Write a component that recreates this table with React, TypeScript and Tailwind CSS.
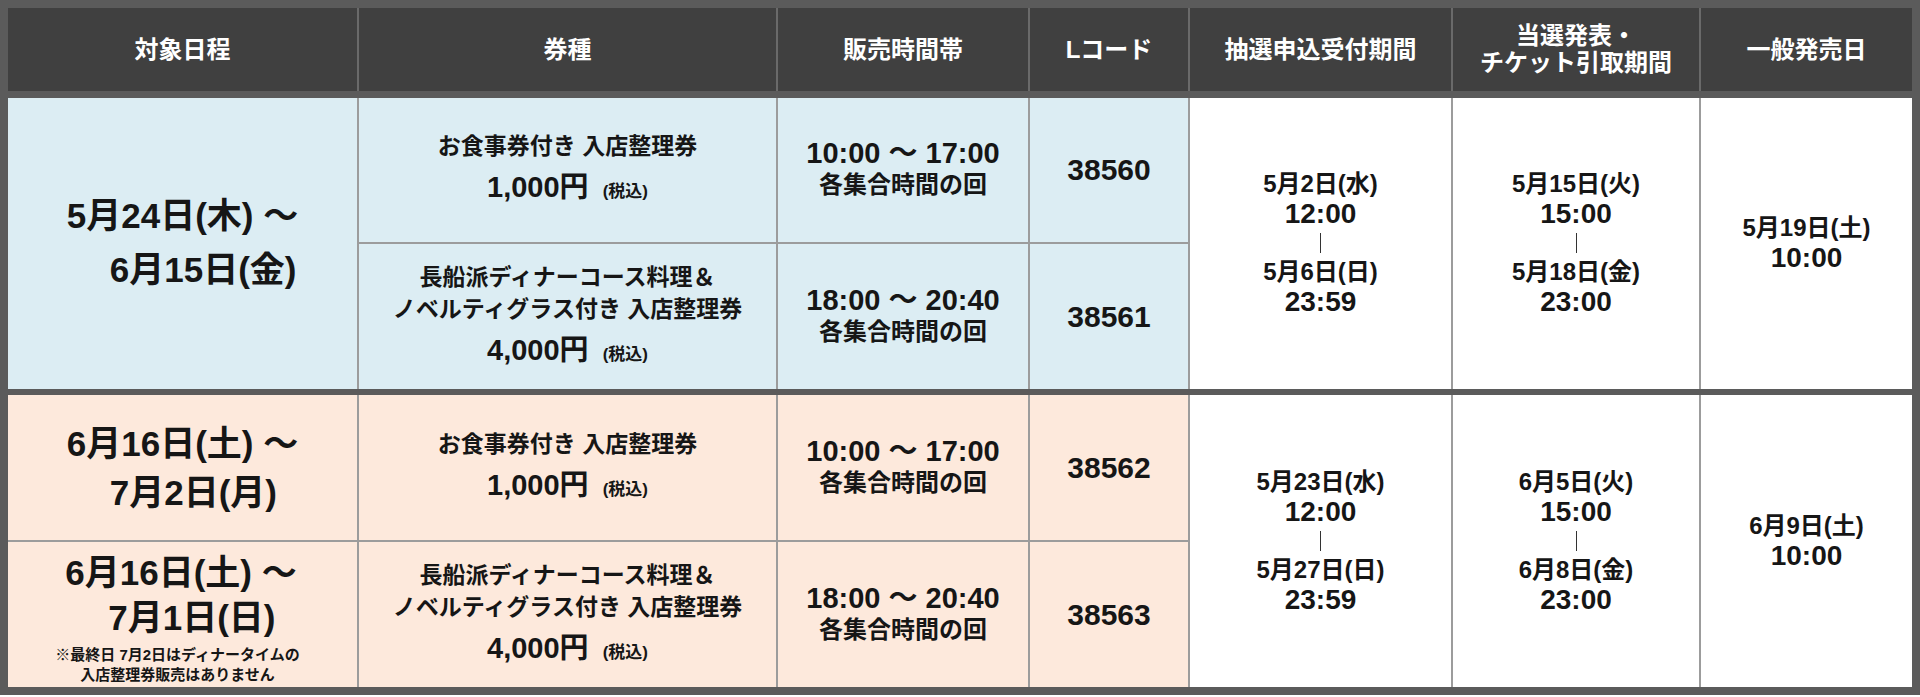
import React from 'react';

const FONT = "font-['Liberation_Sans','Noto_Sans_CJK_JP',sans-serif]";

interface TicketRow {
  name: string[];
  price: string;
  time: string;
  code: string;
}

interface Group {
  bg: string;
  dates: { from: string; to: string; note?: string[]; lh: string }[];
  rows: TicketRow[];
  lottery: [string, string, string, string];
  result: [string, string, string, string];
  general: [string, string];
}

const groups: Group[] = [
  {
    bg: 'bg-[#dcedf3]',
    dates: [{ from: '5月24日(木) 〜', to: '6月15日(金)', lh: 'leading-[54px]' }],
    rows: [
      { name: ['お食事券付き 入店整理券'], price: '1,000円', time: '10:00 〜 17:00', code: '38560' },
      {
        name: ['長船派ディナーコース料理＆', 'ノベルティグラス付き 入店整理券'],
        price: '4,000円',
        time: '18:00 〜 20:40',
        code: '38561',
      },
    ],
    lottery: ['5月2日(水)', '12:00', '5月6日(日)', '23:59'],
    result: ['5月15日(火)', '15:00', '5月18日(金)', '23:00'],
    general: ['5月19日(土)', '10:00'],
  },
  {
    bg: 'bg-[#fde9dc]',
    dates: [
      { from: '6月16日(土) 〜', to: '7月2日(月)', lh: 'leading-[49px]' },
      {
        from: '6月16日(土) 〜',
        to: '7月1日(日)',
        lh: 'leading-[45px]',
        note: ['※最終日 7月2日はディナータイムの', '入店整理券販売はありません'],
      },
    ],
    rows: [
      { name: ['お食事券付き 入店整理券'], price: '1,000円', time: '10:00 〜 17:00', code: '38562' },
      {
        name: ['長船派ディナーコース料理＆', 'ノベルティグラス付き 入店整理券'],
        price: '4,000円',
        time: '18:00 〜 20:40',
        code: '38563',
      },
    ],
    lottery: ['5月23日(水)', '12:00', '5月27日(日)', '23:59'],
    result: ['6月5日(火)', '15:00', '6月8日(金)', '23:00'],
    general: ['6月9日(土)', '10:00'],
  },
];

const headers = ['対象日程', '券種', '販売時間帯', 'Lコード', '抽選申込受付期間', '当選発表・\nチケット引取期間', '一般発売日'];

function DateCell({ d }: { d: Group['dates'][number] }) {
  return (
    <div className={`inline-block text-left font-bold ${d.note ? 'pt-[8px]' : ''}`}>
      <div className={`text-[35px] ${d.lh}`}>{d.from}</div>
      <div className={`pl-[43px] text-[35px] ${d.lh}`}>{d.to}</div>
      {d.note && (
        <div className="-ml-[10px] mt-[5px] text-center text-[15px] leading-[20px]">
          {d.note.map((n) => (
            <div key={n}>{n}</div>
          ))}
        </div>
      )}
    </div>
  );
}

function Period({ p }: { p: [string, string, string, string] }) {
  return (
    <div className="flex flex-col items-center font-semibold">
      <div className="text-[24px] leading-[30px]">{p[0]}</div>
      <div className="text-[28px] leading-[30px]">{p[1]}</div>
      <div className="my-[4px] h-[20px] w-px bg-[#333]" />
      <div className="text-[24px] leading-[30px]">{p[2]}</div>
      <div className="text-[28px] leading-[30px]">{p[3]}</div>
    </div>
  );
}

export default function App() {
  const line = 'border-2 border-[#9c9c9c]';
  return (
    <div className={`h-[697px] w-[1920px] overflow-hidden bg-white text-[#161616] ${FONT}`}>
      <table className="w-[1920px] table-fixed border-collapse border-[8px] border-[#5b5b5b] text-center">
        <colgroup>
          <col className="w-[354px]" />
          <col className="w-[419px]" />
          <col className="w-[252px]" />
          <col className="w-[160px]" />
          <col className="w-[263px]" />
          <col className="w-[248px]" />
          <col />
        </colgroup>
        <thead>
          <tr className="h-[90px] bg-[#404040] text-white">
            {headers.map((h) => (
              <th
                key={h}
                className="whitespace-pre-line border-x-2 border-b-[7px] border-x-[#6a6a6a] border-b-[#5b5b5b] text-[24px] font-semibold leading-[27px]"
              >
                {h}
              </th>
            ))}
          </tr>
        </thead>
        <tbody>
          {groups.map((g, gi) =>
            g.rows.map((r, ri) => (
              <tr
                key={`${gi}-${ri}`}
                className={`${gi === 1 && ri === 1 ? 'h-[148px]' : 'h-[149px]'} ${
                  ri === 0 && gi > 0 ? 'border-t-[6px] border-t-[#5b5b5b]' : ''
                }`}
              >
                {(g.dates.length === 2 || ri === 0) && (
                  <td rowSpan={g.dates.length === 2 ? 1 : 2} className={`${line} ${g.bg}`}>
                    <DateCell d={g.dates[g.dates.length === 2 ? ri : 0]} />
                  </td>
                )}
                <td className={`${line} ${g.bg} font-semibold`}>
                  {r.name.map((n) => (
                    <div key={n} className="text-[23px] leading-[32px]">
                      {n}
                    </div>
                  ))}
                  <div className="mt-[8px] leading-[34px]">
                    <span className="text-[29px]">{r.price}</span>
                    <span className="ml-[14px] text-[17px]">(税込)</span>
                  </div>
                </td>
                <td className={`${line} ${g.bg} font-semibold`}>
                  <div className="text-[29px] leading-[31px]">{r.time}</div>
                  <div className="text-[24px] leading-[32px]">各集合時間の回</div>
                </td>
                <td className={`${line} ${g.bg} text-[30px] font-semibold`}>{r.code}</td>
                {ri === 0 && (
                  <>
                    <td rowSpan={2} className={`${line} bg-white`}>
                      <Period p={g.lottery} />
                    </td>
                    <td rowSpan={2} className={`${line} bg-white`}>
                      <Period p={g.result} />
                    </td>
                    <td rowSpan={2} className={`${line} bg-white font-semibold`}>
                      <div className="text-[24px] leading-[30px]">{g.general[0]}</div>
                      <div className="text-[28px] leading-[30px]">{g.general[1]}</div>
                    </td>
                  </>
                )}
              </tr>
            )),
          )}
        </tbody>
      </table>
    </div>
  );
}
